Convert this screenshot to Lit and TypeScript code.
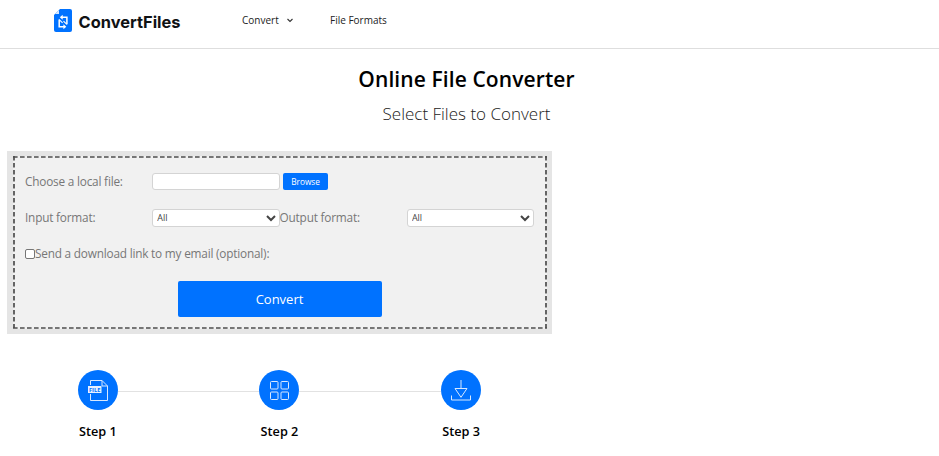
import { LitElement, html, css, svg } from "lit";
import { customElement } from "lit/decorators.js";

const fileIcon = svg`<path d="M12.5 15V10.5H24L29.5 16V30.5H12.5V24M24 10.5V16H29.5"/>
  <rect x="10" y="16" width="13.5" height="7" fill="#e8f2ff" stroke="none"/>
  <text x="11" y="21.6" textLength="11.4" lengthAdjust="spacingAndGlyphs">FILE</text>`;
const gridIcon = svg`<rect x="11.5" y="11.5" width="7.5" height="7.5" rx="1"/><rect x="22" y="11.5" width="7.5" height="7.5" rx="1"/>
  <rect x="11.5" y="22" width="7.5" height="7.5" rx="1"/><rect x="22" y="22" width="7.5" height="7.5" rx="1"/>`;
const downloadIcon = svg`<path d="M20 10V18.5M14 18.5H26L20 27.3ZM10.5 25.5V30H29.5V25.5"/>`;

@customElement("app-root")
export class AppRoot extends LitElement {
  static styles = css`
    :host { display: block; height: 456px; overflow: hidden; background: #fff; color: #000; font-family: "Open Sans", "Noto Sans", sans-serif; }
    * { box-sizing: border-box; }
    header { height: 49px; border-bottom: 1px solid #dedede; display: flex; padding-left: 54px; }
    .logo { display: flex; width: 188px; padding-top: 9px; }
    .logo svg { width: 18px; height: 23px; flex: none; }
    .logo .brand { width: 105px; height: 24px; margin-left: 6px; overflow: visible; }
    .brand text { font: 750 16.5px "Inter", sans-serif; fill: #101214; }
    nav { display: flex; align-items: flex-start; padding-top: 12px; font-size: 10px; line-height: 16px; color: #222; }
    nav span:first-child { width: 88px; display: flex; align-items: center; gap: 8px; }
    nav svg { width: 6px; height: 5px; }
    .head { width: 933px; text-align: center; }
    h1 { margin: 16px 0 0; font-size: 21px; line-height: 28px; font-weight: 550; letter-spacing: 0.1px; }
    h2 { margin: 9px 0 0; font-size: 17px; line-height: 24px; font-weight: 300; color: #222; }
    .panel { width: 545px; height: 183px; margin: 25px 0 0 7px; padding: 5px 5px 5px 6px; background: #e5e5e5; }
    .drop { height: 173px; background: #f1f1f1; padding: 17px 12px 0; color: #777; font-size: 11.8px; letter-spacing: -0.2px; position: relative; }
    .dash { position: absolute; inset: 0; width: 100%; height: 100%; pointer-events: none; fill: none; stroke: #4d4d4d; stroke-width: 1.7; stroke-dasharray: 4.6 2.4; }
    .row { display: flex; align-items: center; height: 18px; margin-bottom: 18px; white-space: nowrap; }
    .row > label { width: 127.3px; flex: none; line-height: 18px; padding-bottom: 2px; }
    input[type="text"], select { width: 127.3px; height: 18px; flex: none; margin: 0 0 1px; border: 1px solid #d4d4d4; border-radius: 3px; background: #fff; color: #444; font: 9px "Open Sans", sans-serif; padding: 0; outline: none; }
    input[type="text"], .browse { height: 17px; }
    .browse { width: 45px; margin: 0 0 1px 3.5px; padding: 0 0 1px; border: 0; border-radius: 2px; background: #0072ff; color: #fff; font: 500 8.3px "Open Sans", sans-serif; }
    .row > label.check { width: auto; display: flex; align-items: center; }
    .box { width: 9.5px; height: 10px; margin: 2px 0.5px 0 0; border: 1px solid #767676; border-radius: 2px; background: #fff; }
    .convert { display: block; width: 204px; height: 36px; margin: 0 0 0 152.5px; padding: 0 0 1px; border: 0; border-radius: 2px; background: #0072ff; color: #fff; font: 500 13px "Open Sans", sans-serif; }
    .row.mail { margin-bottom: 18px; }
    .steps { width: 545px; margin: 36px 0 0 7px; display: grid; grid-template-columns: repeat(3, 1fr); }
    .step { display: grid; grid-template-columns: 1fr 40px 1fr; align-items: center; }
    .line { height: 1px; margin-top: 3px; background: #e2e2e2; }
    .step:first-child .line.before, .step:last-child .line.after { visibility: hidden; }
    .disc { width: 40px; height: 40px; border-radius: 50%; background: #0072ff; }
    .disc svg { display: block; width: 40px; height: 40px; fill: none; stroke: #d8e9ff; stroke-width: 1; }
    .disc text { font: 700 5.5px "Open Sans", sans-serif; fill: #0072ff; stroke: none; }
    .name { grid-column: 1 / 4; text-align: center; font-size: 12.7px; font-weight: 570; line-height: 18px; margin-top: 12px; }
  `;

  private step(name: string, icon: unknown) {
    return html`<div class="step"><div class="line before"></div>
      <div class="disc"><svg viewBox="0 0 40 40">${icon}</svg></div>
      <div class="line after"></div><div class="name">${name}</div></div>`;
  }

  render() {
    return html`
      <header>
        <div class="logo">
          <svg viewBox="0 0 18 23"><path d="M6 0H16Q18 0 18 2V21Q18 23 16 23H2Q0 23 0 21V6Z" fill="#0072ff"/><path d="M5 1V5H1Z" fill="#d7e8ff"/>
            <path d="M8 8.2H12.9V15.2M10 17.8H5.2V10.5" fill="none" stroke="#fff" stroke-width="1.5"/>
            <path d="M8.7 5.7V10.7L5.8 8.2ZM9.4 15.3V20.3L12.3 17.8Z" fill="#fff"/><path d="M5.2 10.6L8.6 13.8M9.5 12.2L12.9 15.4" fill="none" stroke="#fff" stroke-width="1.1"/></svg>
          <svg class="brand" viewBox="0 0 105 24"><text x="0.5" y="18.5" textLength="102" lengthAdjust="spacingAndGlyphs">ConvertFiles</text></svg>
        </div>
        <nav><span>Convert <svg viewBox="0 0 6 5"><path d="M.5 1L3 3.5L5.5 1" fill="none" stroke="#333" stroke-width="1.1"/></svg></span><span>File Formats</span></nav>
      </header>
      <div class="head"><h1>Online File Converter</h1><h2>Select Files to Convert</h2></div>
      <div class="panel"><div class="drop">
        <svg class="dash" viewBox="0 0 534 173"><path d="M0 1H534M0 172H534M1 0V173M533 0V173"/></svg>
        <div class="row"><label>Choose a local file:</label><input type="text"><button class="browse">Browse</button></div>
        <div class="row"><label>Input format:</label><select><option>All</option></select><label>Output format:</label><select><option>All</option></select></div>
        <div class="row mail"><label class="check"><span class="box"></span>Send a download link to my email (optional):</label></div>
        <button class="convert">Convert</button>
      </div></div>
      <div class="steps">${this.step("Step 1", fileIcon)}${this.step("Step 2", gridIcon)}${this.step("Step 3", downloadIcon)}</div>`;
  }
}
